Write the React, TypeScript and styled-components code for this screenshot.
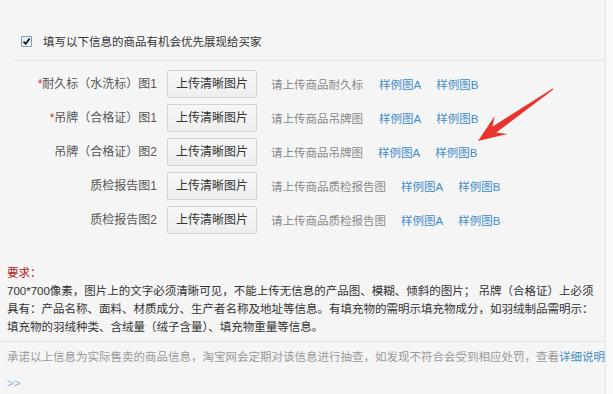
import React from "react";
import styled, { createGlobalStyle } from "styled-components";

const GlobalStyle = createGlobalStyle`
  html, body { margin: 0; padding: 0; background: #fafafa; }
  body { font-family: "Liberation Sans", "Noto Sans CJK SC", sans-serif; font-size: 11.5px; color: #333; }
`;

const Page = styled.div`
  position: relative;
  width: 606px;
  height: 394px;
  background: #f5f5f5;
  border-right: 1px solid #e4e4e4;
  box-sizing: border-box;
  overflow: hidden;
`;

const CheckRow = styled.label`
  display: flex;
  align-items: center;
  gap: 11px;
  height: 11px;
  margin: 0 0 0 21px;
  padding-top: 36px;
  line-height: 12px;
  color: #333;
`;

const CheckBox = styled.span`
  display: inline-flex;
  align-items: center;
  justify-content: center;
  width: 11px;
  height: 11px;
  box-sizing: border-box;
  border: 1px solid #7f9bbf;
  border-radius: 1px;
  background: linear-gradient(135deg, #dfe8f3, #ffffff);
`;

const Divider = styled.div<{ $inset: number; $top: number }>`
  height: 1px;
  background: #e6e6e6;
  margin-left: ${(p) => p.$inset}px;
  margin-top: ${(p) => p.$top}px;
`;

const FieldList = styled.div`
  display: flex;
  flex-direction: column;
  gap: 6px;
  margin-top: 9px;
`;

const FieldRow = styled.div`
  display: flex;
  align-items: center;
  height: 28px;
  white-space: nowrap;
`;

const Label = styled.span`
  width: 157px;
  text-align: right;
  color: #555;
  font-size: 12px;
  line-height: 14px;
`;

const Star = styled.span`
  color: #c0392b;
`;

const UploadButton = styled.button`
  margin-left: 10px;
  width: 90px;
  height: 28px;
  padding: 0;
  border: 1px solid #d3d3d3;
  border-radius: 2px;
  background: linear-gradient(#f7f7f7, #eeeeee);
  color: #333;
  font-family: inherit;
  font-size: 12px;
  line-height: 14px;
`;

const Hint = styled.span`
  margin-left: 14px;
  color: #888;
`;

const SampleLink = styled.a<{ $gap: number }>`
  margin-left: ${(p) => p.$gap}px;
  color: #3f8ccb;
  text-decoration: none;
`;

const Requirements = styled.div`
  margin-top: 30px;
  padding-left: 7px;
  line-height: 18px;
  color: #333;
  white-space: nowrap;
`;

const ReqTitle = styled.div`
  color: #b0201c;
`;

const Commitment = styled.div`
  margin-top: 2px;
  padding-left: 7px;
  line-height: 26px;
  color: #999;
  white-space: nowrap;
`;

const DetailLink = styled.a`
  color: #3f8ccb;
  text-decoration: none;
`;

const More = styled.a`
  color: #8ab4dc;
  text-decoration: none;
`;

const ArrowLayer = styled.svg`
  position: absolute;
  left: 470px;
  top: 80px;
  width: 90px;
  height: 70px;
  pointer-events: none;
`;

type Field = { label: string; required?: boolean; hint: string; indent: number };

const fields: Field[] = [
  { label: "耐久标（水洗标）图1", required: true, hint: "请上传商品耐久标", indent: 16 },
  { label: "吊牌（合格证）图1", required: true, hint: "请上传商品吊牌图", indent: 16 },
  { label: "吊牌（合格证）图2", hint: "请上传商品吊牌图", indent: 15 },
  { label: "质检报告图1", hint: "请上传商品质检报告图", indent: 15 },
  { label: "质检报告图2", hint: "请上传商品质检报告图", indent: 15 },
];

export default function App() {
  return (
    <>
      <GlobalStyle />
      <Page>
        <CheckRow>
          <CheckBox>
            <svg width="9" height="9" viewBox="0 0 9 9">
              <path d="M1.5 4.5 L3.6 6.8 L7.6 1.6" fill="none" stroke="#1a1a1a" strokeWidth="1.8" />
            </svg>
          </CheckBox>
          填写以下信息的商品有机会优先展现给买家
        </CheckRow>
        <Divider $inset={14} $top={13} />
        <FieldList>
          {fields.map((f) => (
            <FieldRow key={f.label}>
              <Label>
                {f.required && <Star>*</Star>}
                {f.label}
              </Label>
              <UploadButton>上传清晰图片</UploadButton>
              <Hint>{f.hint}</Hint>
              <SampleLink $gap={f.indent}>样例图A</SampleLink>
              <SampleLink $gap={15}>样例图B</SampleLink>
            </FieldRow>
          ))}
        </FieldList>
        <Requirements>
          <ReqTitle>要求：</ReqTitle>
          700*700像素，图片上的文字必须清晰可见，不能上传无信息的产品图、模糊、倾斜的图片； 吊牌（合格证）上必须
          <br />
          具有：产品名称、面料、材质成分、生产者名称及地址等信息。有填充物的需明示填充物成分，如羽绒制品需明示：
          <br />
          填充物的羽绒种类、含绒量（绒子含量）、填充物重量等信息。
        </Requirements>
        <Divider $inset={0} $top={5} />
        <Commitment>
          承诺以上信息为实际售卖的商品信息，淘宝网会定期对该信息进行抽查，如发现不符合会受到相应处罚，查看
          <DetailLink>详细说明</DetailLink>
          <br />
          <More>&gt;&gt;</More>
        </Commitment>
        <ArrowLayer viewBox="0 0 90 70">
          <polygon
            points="82.7,8.6 22.4,46.7 24.7,36 8,61 37.3,54 26.4,52.5 83.3,9.4"
            fill="#e8332e"
          />
        </ArrowLayer>
      </Page>
    </>
  );
}
